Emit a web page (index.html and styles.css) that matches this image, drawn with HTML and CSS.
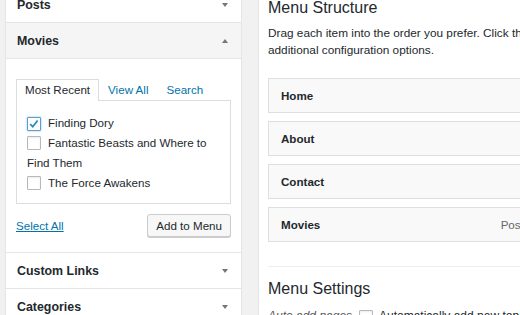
FILE: index.html
```html
<!DOCTYPE html>
<html>
<head>
<meta charset="utf-8">
<link rel="stylesheet" href="styles.css">
</head>
<body>
<div class="screen">
  <div class="left">
    <div class="acc-head"><span>Posts</span><span class="arrow down"></span></div>
    <div class="acc-head open"><span>Movies</span><span class="arrow up"></span></div>
    <div class="acc-body">
      <div class="tabs">
        <span class="tab active">Most Recent</span>
        <a class="tab link">View All</a>
        <a class="tab link">Search</a>
      </div>
      <div class="panel">
        <div class="opt"><span class="cb checked"><svg viewBox="0 0 14 14" width="12" height="12"><path d="M2.5 7.2 L5.6 10.2 L11.2 2.8" fill="none" stroke="#1e8cbe" stroke-width="2"/></svg></span>Finding Dory</div>
        <div class="opt"><span class="cb"></span>Fantastic Beasts and Where to Find Them</div>
        <div class="opt"><span class="cb"></span>The Force Awakens</div>
      </div>
      <div class="actions">
        <a class="select-all">Select All</a>
        <span class="btn">Add to Menu</span>
      </div>
    </div>
    <div class="acc-head"><span>Custom Links</span><span class="arrow down"></span></div>
    <div class="acc-head"><span>Categories</span><span class="arrow down"></span></div>
  </div>
  <div class="right">
    <h3 class="title">Menu Structure</h3>
    <p class="desc">Drag each item into the order you prefer. Click the arrow on the right of the item to reveal additional configuration options.</p>
    <div class="items">
      <div class="item"><span class="item-name">Home</span></div>
      <div class="item"><span class="item-name">About</span></div>
      <div class="item"><span class="item-name">Contact</span></div>
      <div class="item"><span class="item-name">Movies</span><span class="item-type">Post Type</span></div>
    </div>
    <div class="sep"></div>
    <h3 class="title">Menu Settings</h3>
    <div class="setting">
      <span class="setting-label">Auto add pages</span>
      <span class="cb"></span>
      <span>Automatically add new top-level pages to this menu</span>
    </div>
  </div>
</div>
</body>
</html>
```

FILE: styles.css
```css
html, body {
  margin: 0;
  padding: 0;
}
body {
  width: 520px;
  height: 315px;
  overflow: hidden;
  background: #f1f1f1;
  font-family: "Liberation Sans", Arial, sans-serif;
  color: #23282d;
  font-size: 11.6px;
}
.screen {
  display: flex;
  align-items: flex-start;
  padding-left: 5px;
  gap: 16px;
  height: 315px;
}
.left {
  width: 237px;
  flex-shrink: 0;
  box-sizing: border-box;
  background: #fff;
  border-left: 1px solid #e5e5e5;
  border-right: 1px solid #e5e5e5;
  margin-top: -13px;
}
.acc-head {
  height: 35px;
  border-bottom: 1px solid #e5e5e5;
  display: flex;
  align-items: center;
  justify-content: space-between;
  padding: 0 13px 0 11px;
  font-weight: bold;
  font-size: 12.4px;
  background: #fff;
}
.acc-head.open {
  background: #f5f5f5;
}
.arrow {
  width: 0;
  height: 0;
  border-left: 3.5px solid transparent;
  border-right: 3.5px solid transparent;
}
.arrow.down {
  border-top: 4px solid #72777c;
}
.arrow.up {
  border-bottom: 4px solid #72777c;
}
.acc-body {
  padding: 20px 10px 15px 10px;
  border-bottom: 1px solid #e5e5e5;
}
.tabs {
  display: flex;
  align-items: flex-start;
  height: 21px;
}
.tab {
  padding: 0 8px;
  line-height: 20px;
  border: 1px solid transparent;
  border-bottom: 0;
}
.tab.active {
  border-color: #ddd;
  background: #fff;
  position: relative;
  z-index: 1;
  padding-bottom: 1px;
}
.link {
  color: #0073aa;
}
.panel {
  border: 1px solid #ddd;
  background: #fff;
  padding: 12px 10px 10px 10px;
  line-height: 20px;
}
.cb {
  display: inline-flex;
  align-items: center;
  justify-content: center;
  box-sizing: border-box;
  width: 14px;
  height: 14px;
  border: 1px solid #b4b9be;
  border-radius: 1px;
  background: #fff;
  box-shadow: inset 0 1px 2px rgba(0, 0, 0, 0.08);
  vertical-align: -3px;
  margin-right: 7px;
}
.cb.checked {
  border-color: #5b9dd9;
  box-shadow: 0 0 2px rgba(30, 140, 190, 0.6);
}
.actions {
  display: flex;
  justify-content: space-between;
  align-items: center;
  margin-top: 10px;
}
.select-all {
  color: #0073aa;
  text-decoration: underline;
}
.btn {
  box-sizing: border-box;
  height: 23px;
  line-height: 21px;
  padding: 0 8px;
  border: 1px solid #ccc;
  border-radius: 3px;
  background: #f7f7f7;
  box-shadow: 0 1px 0 #ccc;
  color: #23282d;
}
.right {
  width: 520px;
  flex-shrink: 0;
  box-sizing: border-box;
  height: 315px;
  background: #fff;
  border-left: 1px solid #e5e5e5;
  padding-left: 9px;
}
.title {
  margin: 0;
  font-size: 16px;
  line-height: 16px;
  font-weight: normal;
  color: #23282d;
}
.desc {
  margin: 9px 0 0 0;
  width: 485px;
  font-size: 11.8px;
  line-height: 17px;
}
.items {
  margin-top: 19px;
  display: flex;
  flex-direction: column;
  gap: 8px;
}
.item {
  box-sizing: border-box;
  width: 300px;
  height: 35px;
  border: 1px solid #dfdfdf;
  background: #f9f9f9;
  display: flex;
  align-items: center;
  padding: 0 15px 0 12px;
}
.item-name {
  font-weight: bold;
  flex: 1;
}
.item-type {
  color: #666;
}
.sep {
  margin-top: 24px;
  border-top: 1px solid #eee;
  width: 300px;
  margin-bottom: 14px;
}
.setting {
  display: flex;
  align-items: center;
  margin-top: 11px;
  font-size: 12px;
  line-height: 17px;
  white-space: nowrap;
}
.setting-label {
  width: 91px;
  font-style: italic;
  color: #555;
}
.setting .cb {
  margin-right: 6px;
}
```
